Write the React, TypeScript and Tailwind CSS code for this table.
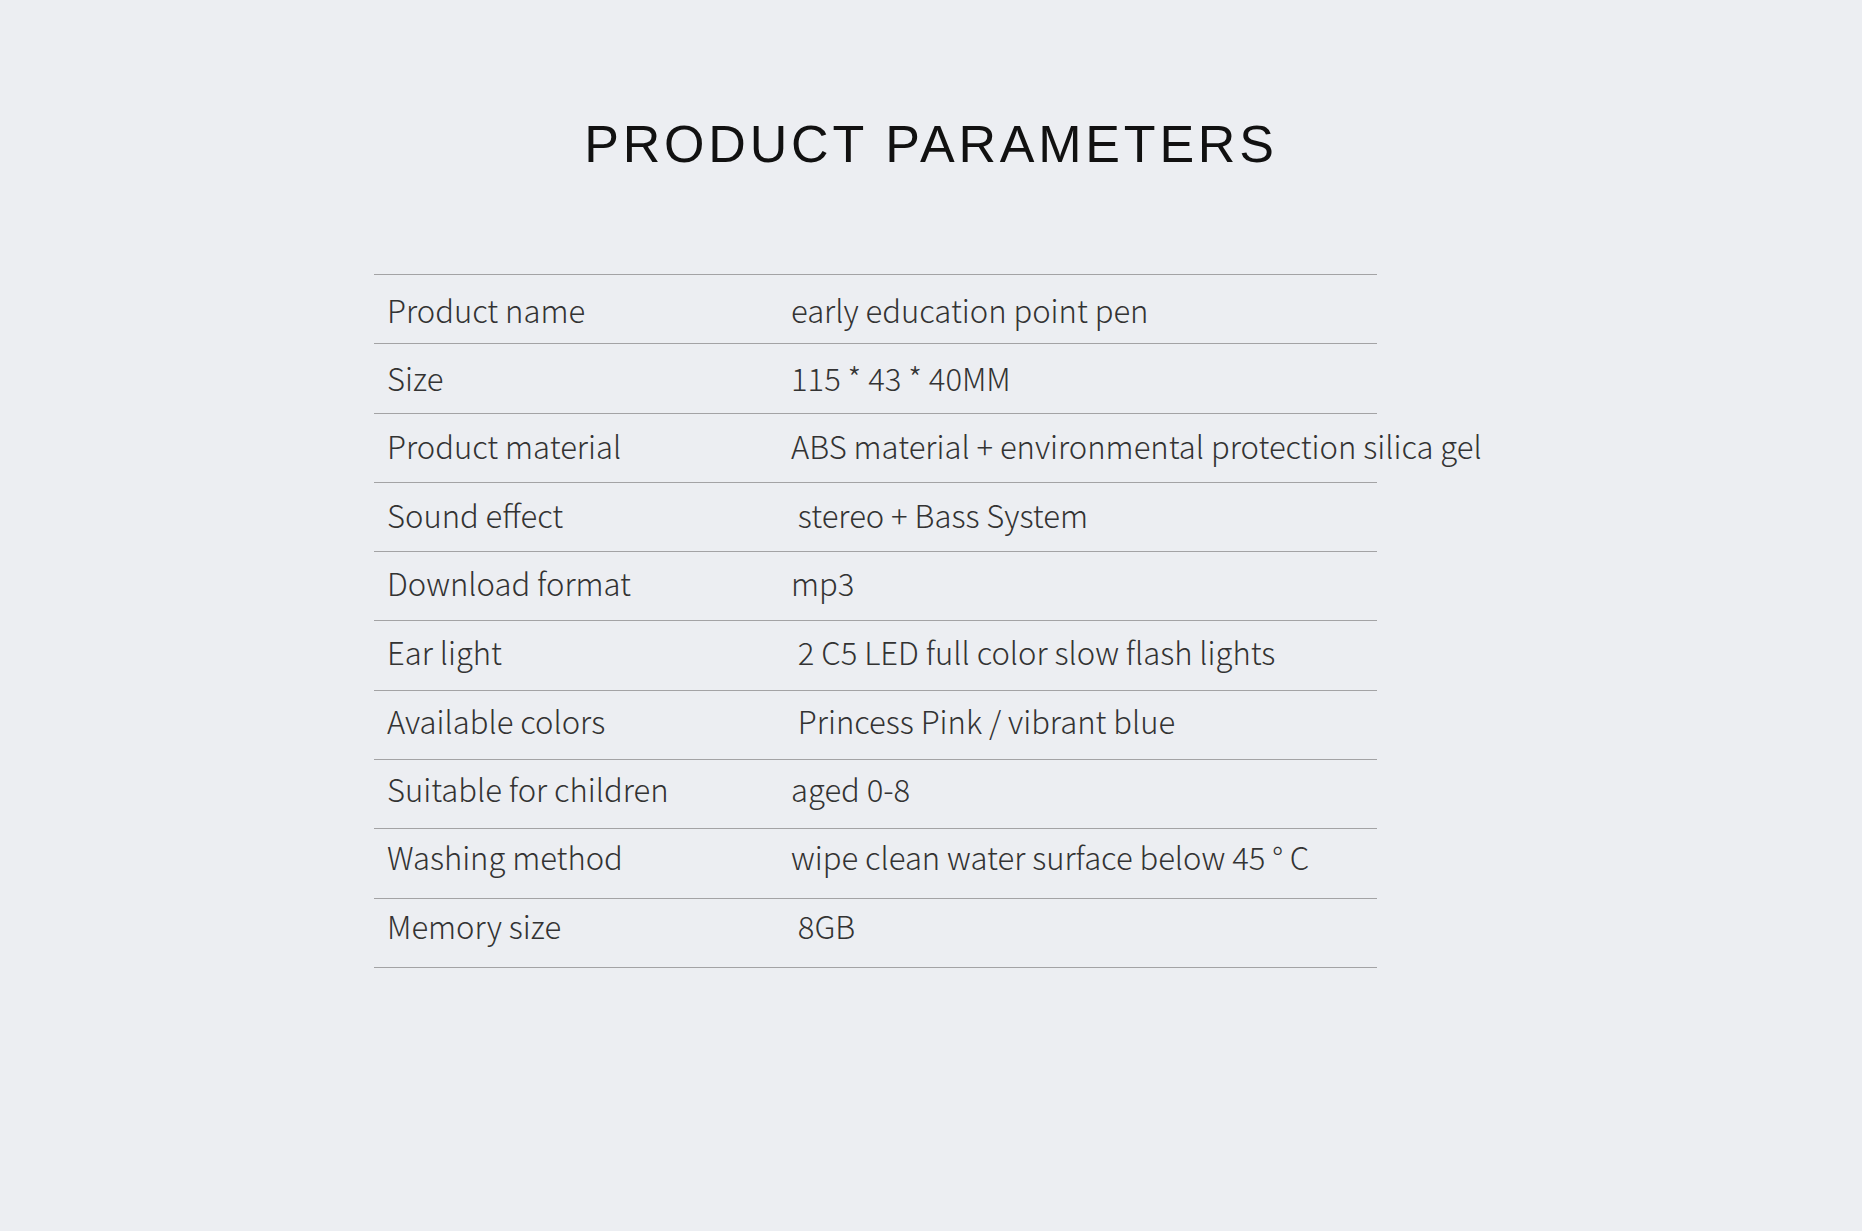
import React from 'react';

type Param = {
  label: string;
  value: string;
};

const params: Param[] = [
  { label: 'Product name', value: 'early education point pen' },
  { label: 'Size', value: '115 * 43 * 40MM' },
  { label: 'Product material', value: 'ABS material + environmental protection silica gel' },
  { label: 'Sound effect', value: ' stereo + Bass System' },
  { label: 'Download format', value: 'mp3' },
  { label: 'Ear light', value: ' 2 C5 LED full color slow flash lights' },
  { label: 'Available colors', value: ' Princess Pink / vibrant blue' },
  { label: 'Suitable for children', value: 'aged 0-8' },
  { label: 'Washing method', value: 'wipe clean water surface below 45 ° C' },
  { label: 'Memory size', value: ' 8GB' },
];

// text in the source image creeps up a little on each row
const ParamRow: React.FC<{ param: Param; index: number }> = ({ param, index }) => (
  <div className="flex h-[69.3px] items-center border-b border-[#a3a3a5]">
    <div className="flex" style={{ transform: `translateY(${1.2 - index * 0.93}px)` }}>
      <span className="w-[417px] shrink-0 pl-[13px]">{param.label}</span>
      <span className="whitespace-pre">{param.value}</span>
    </div>
  </div>
);

const App: React.FC = () => {
  return (
    <div className="min-h-[1231px] w-full bg-[#eceef2] pt-[112px]">
      <h1
        className="text-center text-[52px] leading-[64px] tracking-[3.8px] text-[#111]"
        style={{ fontFamily: '"Liberation Sans", Arial, sans-serif' }}
      >
        PRODUCT PARAMETERS
      </h1>
      <div
        className="ml-[374px] mt-[98px] w-[1003px] border-t border-[#a3a3a5] text-[31px] font-light text-[#333]"
        style={{ fontFamily: '"Noto Sans CJK SC", "Noto Sans", sans-serif' }}
      >
        {params.map((p, i) => (
          <ParamRow key={p.label} param={p} index={i} />
        ))}
      </div>
    </div>
  );
};

export default App;
